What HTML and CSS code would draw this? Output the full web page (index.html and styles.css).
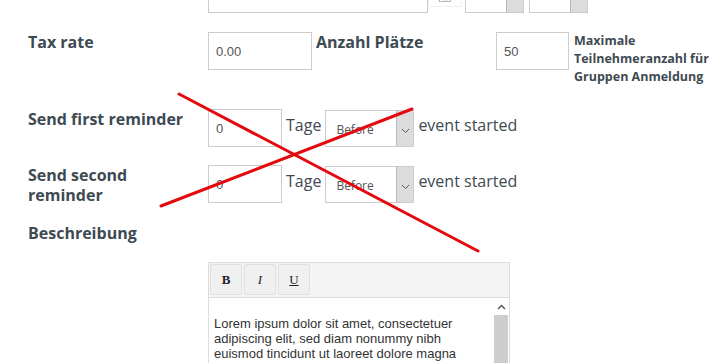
FILE: index.html
```html
<html lang="de">
<head>
    <meta charset="UTF-8" />
    <meta name="viewport" content="width=device-width, initial-scale=1.0" />
    <title>Event bearbeiten</title>
    <link rel="stylesheet" href="styles.css">
</head>
<body>
    <form class="event-form">
        <div class="row row-top">
            <div class="label"></div>
            <input class="field field-date" type="text" value="">
            <span class="cal-btn">
                <svg width="12" height="11" viewBox="0 0 12 11"><rect x="0.5" y="1.5" width="11" height="9" fill="none" stroke="#b5b5b5"/><path d="M0.5 4.5h11M4.5 4.5v6M7.5 4.5v6M0.5 7.5h11" stroke="#c8c8c8" fill="none"/></svg>
            </span>
            <div class="select select-time"><span class="select-value"></span><span class="select-arrow"></span></div>
            <div class="select select-time"><span class="select-value"></span><span class="select-arrow"></span></div>
        </div>

        <div class="row row-tax">
            <label class="label">Tax rate</label>
            <input class="field field-tax" type="text" value="0.00">
            <label class="label label-inline">Anzahl Plätze</label>
            <input class="field field-seats" type="text" value="50">
            <span class="hint">Maximale Teilnehmeranzahl für Gruppen Anmeldung</span>
        </div>

        <div class="row">
            <label class="label">Send first reminder</label>
            <input class="field field-days" type="text" value="0">
            <span class="unit">Tage</span>
            <div class="select select-when">
                <span class="select-value">Before</span>
                <span class="select-arrow"><svg width="9" height="6" viewBox="0 0 9 6"><path d="M1 1l3.5 3.5L8 1" stroke="#555" fill="none"/></svg></span>
            </div>
            <span class="unit">event started</span>
        </div>

        <div class="row">
            <label class="label">Send second<br>reminder</label>
            <input class="field field-days" type="text" value="0">
            <span class="unit">Tage</span>
            <div class="select select-when">
                <span class="select-value">Before</span>
                <span class="select-arrow"><svg width="9" height="6" viewBox="0 0 9 6"><path d="M1 1l3.5 3.5L8 1" stroke="#555" fill="none"/></svg></span>
            </div>
            <span class="unit">event started</span>
        </div>

        <div class="row row-desc">
            <label class="label">Beschreibung</label>
        </div>

        <div class="editor">
            <div class="editor-toolbar">
                <button type="button" class="tb-btn tb-bold">B</button>
                <button type="button" class="tb-btn tb-italic">I</button>
                <button type="button" class="tb-btn tb-underline">U</button>
            </div>
            <div class="editor-body">
                <div class="editor-text">Lorem ipsum dolor sit amet, consectetuer adipiscing elit, sed diam nonummy nibh euismod tincidunt ut laoreet dolore magna</div>
                <div class="scrollbar">
                    <span class="scroll-up"><svg width="9" height="6" viewBox="0 0 9 6"><path d="M1 5l3.5-3.5L8 5" stroke="#505050" stroke-width="1.4" fill="none"/></svg></span>
                    <span class="scroll-thumb"></span>
                </div>
            </div>
        </div>
    </form>

    <!-- red cross drawn over the reminder rows -->
    <svg class="cross" width="724" height="363" viewBox="0 0 724 363">
        <line x1="179" y1="94" x2="478" y2="251" />
        <line x1="412" y1="109" x2="161" y2="206" />
    </svg>
</body>
</html>
```

FILE: styles.css
```css
body {
    margin: 0;
    padding: 0;
    background-color: #fff;
    font-family: "Open Sans", Arial, sans-serif;
    color: #3e4a52;
    overflow: hidden;
    height: 363px;
    position: relative;
}
.event-form {
    padding-left: 28px;
}
.row {
    display: flex;
    align-items: flex-start;
    margin-bottom: 18px;
}
.row-top {
    margin-top: -25px;
    margin-bottom: 19px;
}
.row-tax {
    margin-bottom: 23px;
}
.row-desc {
    margin-bottom: 19px;
}
.label {
    flex: 0 0 180px;
    font-size: 16px;
    font-weight: 700;
    line-height: 20px;
}
.label-inline {
    flex: 0 0 180px;
    margin-left: 4px;
}
.field {
    box-sizing: border-box;
    height: 38px;
    border: 1px solid #ccc;
    padding: 0 7px;
    font-family: "Liberation Sans", Arial, sans-serif;
    font-size: 13px;
    color: #555;
    background: #fff;
    outline: none;
}
.field-date {
    width: 220px;
}
.field-tax {
    width: 104px;
}
.field-seats {
    width: 73px;
}
.field-days {
    width: 74px;
}
.hint {
    width: 145px;
    margin-left: 5px;
    font-size: 12.5px;
    font-weight: 700;
    line-height: 18px;
}
.unit {
    font-size: 16px;
    line-height: 20px;
    margin: 6px 4px 0 4px;
}
.cal-btn {
    box-sizing: border-box;
    width: 34px;
    height: 32px;
    border: 1px solid #f0f0f0;
    border-radius: 2px;
    display: flex;
    align-items: flex-end;
    justify-content: center;
    padding-bottom: 4px;
}
.select {
    box-sizing: border-box;
    display: flex;
    height: 37px;
    border: 1px solid #ccc;
    background: #fff;
    margin-top: 1px;
}
.select-time {
    width: 59px;
    height: 38px;
    margin: 0 0 0 3px;
}
.select-time + .select-time {
    margin-left: 5px;
}
.select-when {
    width: 89px;
}
.select-value {
    flex: 1;
    padding: 10px 0 0 10px;
    font-size: 12px;
    color: #555;
}
.select-arrow {
    box-sizing: border-box;
    width: 17px;
    background: #dcdcdc;
    border-left: 1px solid #bbb;
    display: flex;
    align-items: center;
    justify-content: center;
    padding-top: 4px;
}
.editor {
    margin-left: 180px;
    width: 302px;
    border: 1px solid #ddd;
    box-sizing: border-box;
}
.editor-toolbar {
    display: flex;
    gap: 2px;
    padding: 1px 0 0 1px;
    box-sizing: border-box;
    height: 35px;
    background: #f4f4f4;
    border-bottom: 1px solid #ddd;
}
.tb-btn {
    width: 32px;
    height: 31px;
    border: 1px solid #e0e0e0;
    border-radius: 2px;
    background: #f0f0f0;
    font-family: "Liberation Serif", "Times New Roman", serif;
    font-size: 13px;
    color: #222;
    padding: 0;
}
.tb-bold {
    font-weight: 700;
}
.tb-italic {
    font-style: italic;
}
.tb-underline {
    text-decoration: underline;
}
.editor-body {
    display: flex;
    height: 80px;
}
.editor-text {
    flex: 1;
    padding: 18px 24px 0 5px;
    font-family: "Liberation Sans", Arial, sans-serif;
    font-size: 13px;
    line-height: 15px;
    color: #333;
}
.scrollbar {
    width: 16px;
    display: flex;
    flex-direction: column;
    align-items: center;
}
.scroll-up {
    height: 17px;
    display: flex;
    align-items: center;
}
.scroll-thumb {
    width: 14px;
    flex: 1;
    background: #cdcdcd;
}
.cross {
    position: absolute;
    left: 0;
    top: 0;
    pointer-events: none;
}
.cross line {
    stroke: #e4080f;
    stroke-width: 3;
    stroke-linecap: round;
}
```
